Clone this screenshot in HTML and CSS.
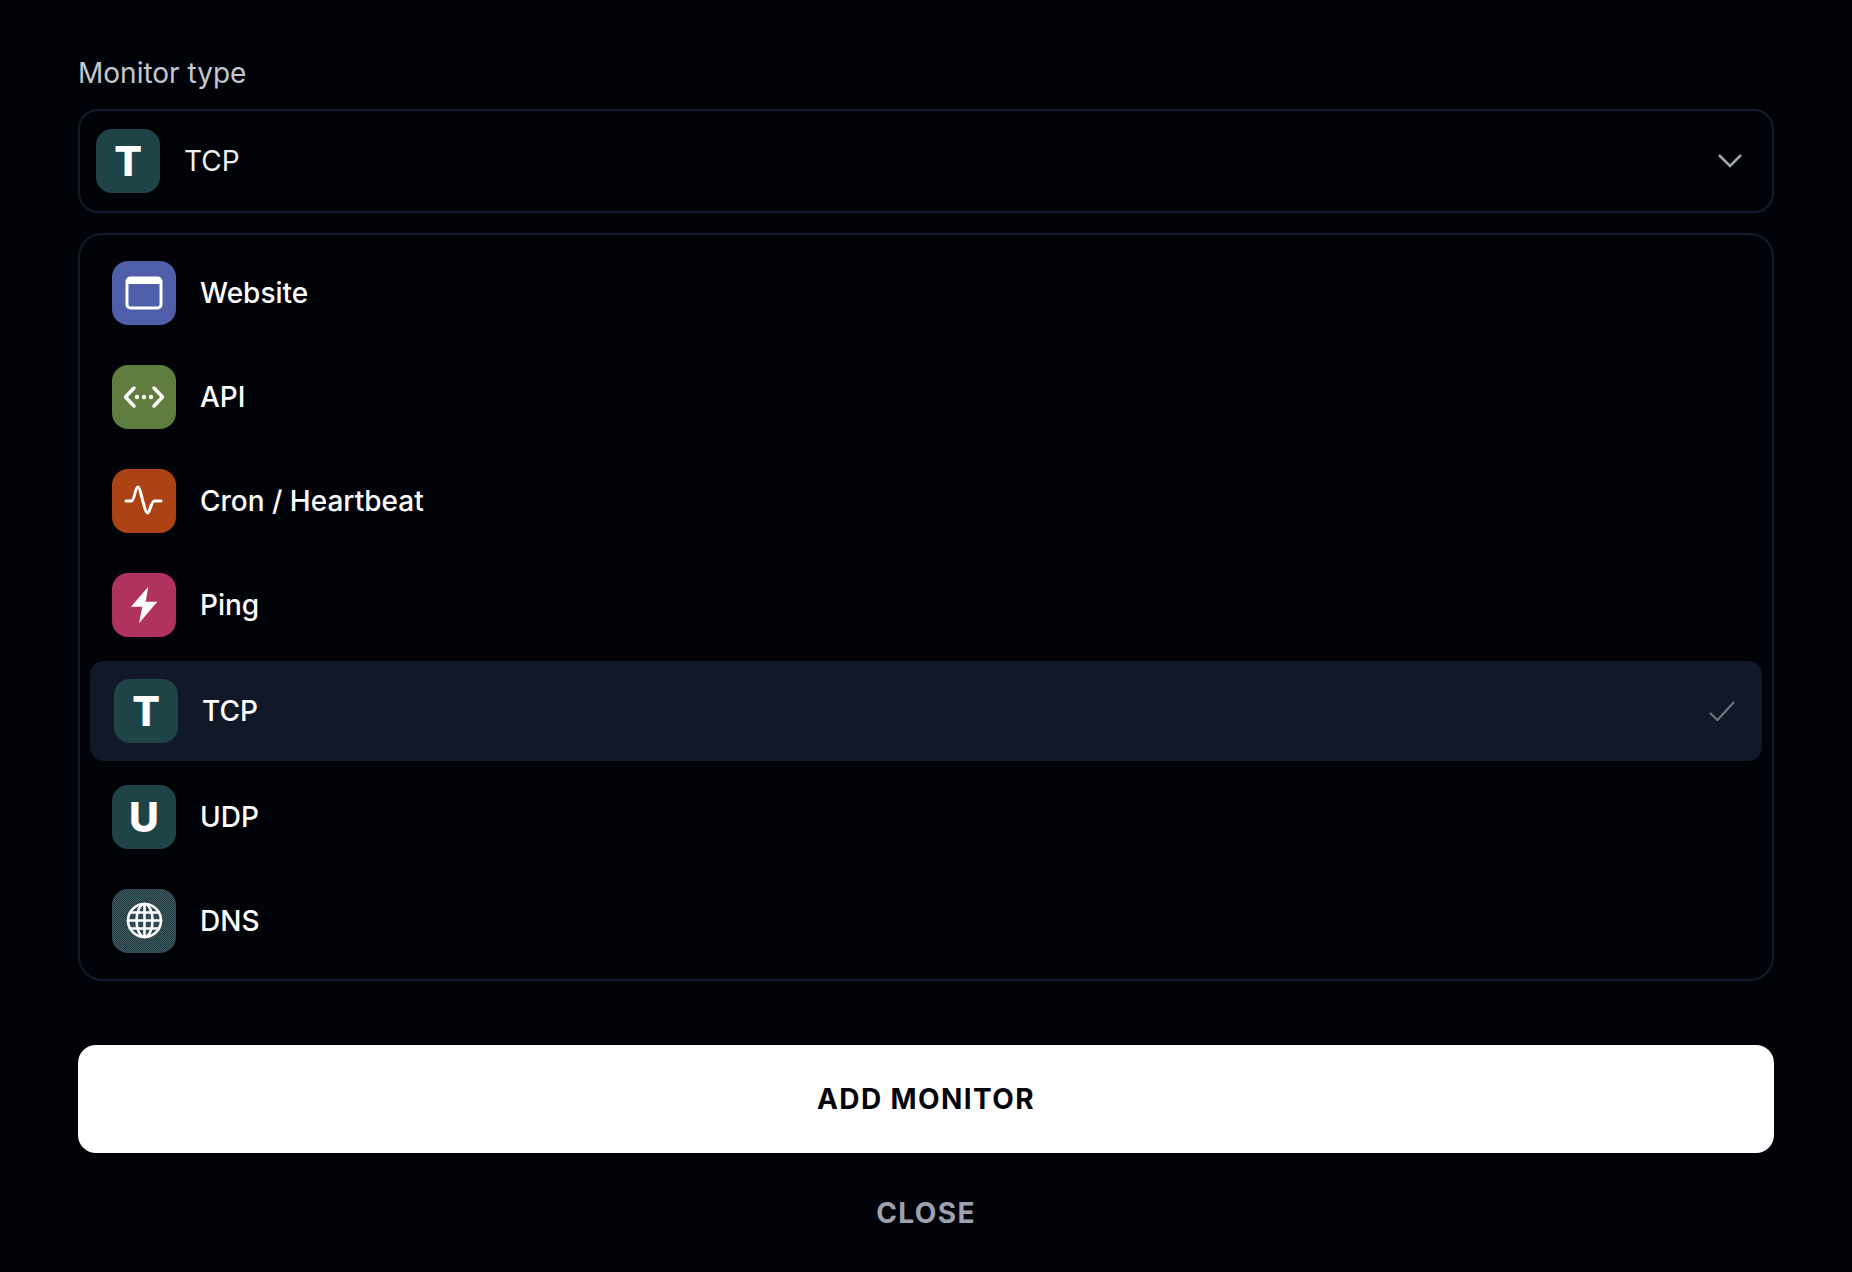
FILE: index.html
```html
<!DOCTYPE html>
<html lang="en">
<head>
<meta charset="utf-8">
<title>Monitor type</title>
<link rel="stylesheet" href="styles.css">
</head>
<body>
<main class="form">
  <label class="label">Monitor type</label>
  <div class="select">
    <span class="tile tile-teal tile-letter">T</span>
    <span class="select-value">TCP</span>
    <svg class="chevron" viewBox="0 0 24 14" aria-hidden="true"><path d="M1 1l11 11L23 1"/></svg>
  </div>
  <ul class="list">
    <li class="row">
      <span class="tile tile-blue">
        <svg class="glyph" viewBox="0 0 64 64" aria-hidden="true"><rect x="15" y="17" width="34" height="30" rx="3.5" class="line"/><path d="M15 23v-2.500a3.500 3.500 0 0 1 3.500-3.500h27a3.500 3.500 0 0 1 3.500 3.500V23z" class="fill"/></svg>
      </span>
      <span class="row-text">Website</span>
    </li>
    <li class="row">
      <span class="tile tile-green">
        <svg class="glyph" viewBox="0 0 64 64" aria-hidden="true"><path d="M22 23l-8.500 9 8.500 9M42 23l8.500 9-8.500 9" class="line bold"/><circle cx="25" cy="32" r="2.200" class="fill"/><circle cx="32" cy="32" r="2.200" class="fill"/><circle cx="39" cy="32" r="2.200" class="fill"/></svg>
      </span>
      <span class="row-text">API</span>
    </li>
    <li class="row">
      <span class="tile tile-orange">
        <svg class="glyph" viewBox="0 0 64 64" aria-hidden="true"><path d="M14 32h5.500c3 0 3.500-14 6.500-14 2.500 0 6.500 26 9.500 26 2.500 0 3.500-12 7-12h6.500" class="line"/></svg>
      </span>
      <span class="row-text">Cron / Heartbeat</span>
    </li>
    <li class="row">
      <span class="tile tile-pink">
        <svg class="glyph" viewBox="0 0 64 64" aria-hidden="true"><path d="M36.300 13.700L19 33.700h11.300L27 50.300l18.300-21.600H33.700z" class="fill"/></svg>
      </span>
      <span class="row-text">Ping</span>
    </li>
    <li class="row row-selected">
      <span class="tile tile-teal tile-letter">T</span>
      <span class="row-text">TCP</span>
      <svg class="check" viewBox="0 0 26 20" aria-hidden="true"><path d="M1 12l7.500 7L25 1"/></svg>
    </li>
    <li class="row">
      <span class="tile tile-teal tile-letter">U</span>
      <span class="row-text">UDP</span>
    </li>
    <li class="row">
      <span class="tile tile-slate">
        <svg class="glyph" viewBox="0 0 64 64" aria-hidden="true"><g class="line globe"><circle cx="32.500" cy="31.500" r="16.500"/><ellipse cx="32.500" cy="31.500" rx="8" ry="16.500"/><path d="M32.500 15v33M18 23.500h29M16 31.500h33M18 39.500h29"/></g></svg>
      </span>
      <span class="row-text">DNS</span>
    </li>
  </ul>
  <button class="btn-primary" type="button">ADD MONITOR</button>
  <button class="btn-close" type="button">CLOSE</button>
</main>
</body>
</html>
```
FILE: styles.css
```css
* { box-sizing: border-box; }
html, body { margin: 0; height: 100%; }
body {
  background: #020308;
  color: #fff;
  font-family: Inter, "Liberation Sans", sans-serif;
}
.form {
  display: flex;
  flex-direction: column;
  padding: 56px 78px 0;
}
.label {
  font-size: 28px;
  line-height: 34px;
  color: #c3c8cf;
  margin-bottom: 19px;
}
.select {
  display: flex;
  align-items: center;
  height: 104px;
  padding: 0 30px 0 16px;
  border: 2px solid #141b2a;
  border-radius: 20px;
}
.select-value {
  flex: 1;
  margin-left: 24px;
  font-size: 28px;
  color: #eef0f3;
}
.chevron {
  width: 24px;
  height: 14px;
  fill: none;
  stroke: #a3a6ab;
  stroke-width: 2.500;
}
.list {
  list-style: none;
  margin: 20px 0 0;
  height: 748px;
  padding: 6px 10px 0;
  border: 2px solid #141b2a;
  border-radius: 24px;
}
.row {
  display: flex;
  align-items: center;
  gap: 24px;
  padding: 20px 22px;
}
.row-selected {
  margin: 4px 0;
  padding: 18px 20px 18px 24px;
  background: #111827;
  border-radius: 14px;
}
.row-text {
  flex: 1;
  font-size: 28px;
  font-weight: 450;
}
.tile {
  flex: none;
  display: flex;
  align-items: center;
  justify-content: center;
  width: 64px;
  height: 64px;
  border-radius: 16px;
}
.tile-letter {
  font-size: 41px;
  font-weight: 800;
  line-height: 1;
}
.tile-teal { background: #1f4448; }
.tile-blue { background: #4f5ea8; }
.tile-green { background: #5f7d3f; }
.tile-orange { background: #ab4315; }
.tile-pink { background: #b0325f; }
.tile-slate {
  background: repeating-conic-gradient(#1f4448 0 25%, #41505a 0 50%) 0 0 / 2px 2px;
}
.glyph { width: 64px; height: 64px; display: block; }
.line { fill: none; stroke: #fff; stroke-width: 3; stroke-linecap: round; stroke-linejoin: round; }
.bold { stroke-width: 3.500; }
.globe { stroke-width: 2.600; }
.fill { fill: #fff; }
.check {
  width: 26px;
  height: 20px;
  margin-right: 7px;
  fill: none;
  stroke: #6f747b;
  stroke-width: 2.200;
}
.btn-primary, .btn-close {
  font-family: inherit;
  border: 0;
  letter-spacing: 1.400px;
  font-size: 28px;
  font-weight: 700;
}
.btn-primary {
  margin-top: 64px;
  height: 108px;
  background: #fff;
  color: #05060c;
  border-radius: 18px;
}
.btn-close {
  margin-top: 33px;
  height: 54px;
  background: none;
  color: #9ca3af;
}
```
